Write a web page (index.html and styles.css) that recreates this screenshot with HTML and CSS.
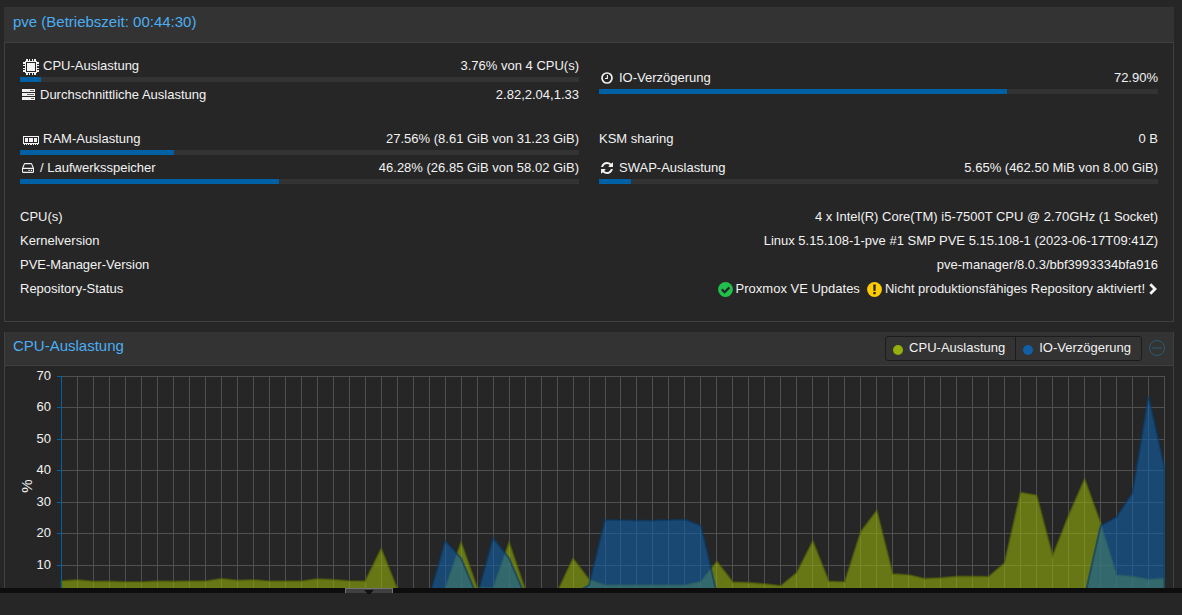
FILE: index.html
```html
<!DOCTYPE html>
<html lang="de">
<head>
<meta charset="utf-8">
<title>pve</title>
<link rel="stylesheet" href="styles.css">
</head>
<body>
<main class="content">
  <section class="panel">
    <header class="panel-header"><h2 class="panel-title">pve (Betriebszeit: 00:44:30)</h2></header>
    <div class="status">
      <div class="usage usage-top">
        <div class="column">
          <div class="item">
            <div class="line">
              <span class="label"><svg class="icon icon-wide" viewBox="0 0 16 16" width="16" height="16" shape-rendering="crispEdges"><path fill="currentColor" fill-rule="evenodd" d="M2 2h12v12H2zM3 3v10h10V3zM4 4h8v8H4zM3 0h2v2H3zM6 0h1v2H6zM9 0h1v2H9zM11 0h2v2h-2zM3 14h2v2H3zM6 14h1v2H6zM9 14h1v2H9zM11 14h2v2h-2zM0 3h2v2H0zM0 6h2v1H0zM0 9h2v1H0zM0 11h2v2H0zM14 3h2v2h-2zM14 6h2v1h-2zM14 9h2v1h-2zM14 11h2v2h-2z"/></svg>CPU-Auslastung</span>
              <span>3.76% von 4 CPU(s)</span>
            </div>
            <div class="bar"><div class="fill" style="width:3.76%"></div></div>
          </div>
          <div class="item">
            <div class="line">
              <span class="label"><svg class="icon icon-tasks" viewBox="0 0 13 11" width="13" height="11"><path fill="currentColor" d="M0 0h13v3H0zM0 4h13v3H0zM0 8h13v3H0z"/><path stroke="#262626" stroke-width="1" d="M8 1.5h4M5 5.5h7M9 9.5h3" opacity=".7"/></svg>Durchschnittliche Auslastung</span>
              <span>2.82,2.04,1.33</span>
            </div>
          </div>
        </div>
        <div class="column column-center">
          <div class="item">
            <div class="line">
              <span class="label"><svg class="icon icon-fa" viewBox="0 0 12 12" width="12" height="12"><circle cx="6" cy="6" r="5" fill="none" stroke="currentColor" stroke-width="1.7"/><path d="M6.4 3v3.5H4" fill="none" stroke="currentColor" stroke-width="1.1"/></svg>IO-Verzögerung</span>
              <span>72.90%</span>
            </div>
            <div class="bar"><div class="fill" style="width:72.9%"></div></div>
          </div>
        </div>
      </div>
      <div class="usage">
        <div class="column">
          <div class="item">
            <div class="line">
              <span class="label"><svg class="icon icon-wide" viewBox="0 0 16 16" width="16" height="16" shape-rendering="crispEdges"><path fill="currentColor" fill-rule="evenodd" d="M0 4h16v8H0zM1 5v6h14V5zM2 6h3v4H2zM6 6h4v4H6zM11 6h3v4h-3zM1 12h1v1H1zM3 12h1v1H3zM5 12h1v1H5zM7 12h2v1H7zM10 12h1v1h-1zM12 12h1v1h-1zM14 12h1v1h-1z"/></svg>RAM-Auslastung</span>
              <span>27.56% (8.61 GiB von 31.23 GiB)</span>
            </div>
            <div class="bar"><div class="fill" style="width:27.56%"></div></div>
          </div>
          <div class="item">
            <div class="line">
              <span class="label"><svg class="icon icon-fa" viewBox="0 0 12 10" width="12" height="10"><path d="M.5 5.5L2.2 1.2Q2.4.6 3 .6h6q.6 0 .8.6l1.7 4.3v3q0 .9-.9.9H1.400q-.9 0-.9-.9zM.5 5.400h11" fill="none" stroke="currentColor" stroke-width="1.1"/><path fill="currentColor" d="M6.500 6.700h1.300V8H6.500zM8.800 6.700h1.300V8H8.800z"/></svg>/ Laufwerksspeicher</span>
              <span>46.28% (26.85 GiB von 58.02 GiB)</span>
            </div>
            <div class="bar"><div class="fill" style="width:46.28%"></div></div>
          </div>
        </div>
        <div class="column">
          <div class="item">
            <div class="line"><span>KSM sharing</span><span>0 B</span></div>
          </div>
          <div class="item">
            <div class="line">
              <span class="label"><svg class="icon icon-fa" viewBox="0 0 1536 1536" width="12" height="12"><path fill="currentColor" d="M1511 928q0 5-1 7-64 268-268 434.500T764 1536q-146 0-282.500-55T238 1324l-129 129q-19 19-45 19t-45-19-19-45V960q0-26 19-45t45-19h448q26 0 45 19t19 45-19 45l-137 137q71 66 161 102t187 36q134 0 250-65t186-179q11-17 53-117 8-23 30-23h192q13 0 22.500 9.500t9.500 22.500zm25-800v448q0 26-19 45t-45 19h-448q-26 0-45-19t-19-45 19-45l138-138Q969 256 768 256q-134 0-250 65T332 500q-11 17-53 117-8 23-30 23H50q-13 0-22.500-9.500T18 608v-7q65-268 270-434.500T768 0q146 0 284 55.500T1297 212l130-129q19-19 45-19t45 19 19 45z"/></svg>SWAP-Auslastung</span>
              <span>5.65% (462.50 MiB von 8.00 GiB)</span>
            </div>
            <div class="bar"><div class="fill" style="width:5.65%"></div></div>
          </div>
        </div>
      </div>
      <dl class="facts">
        <div class="line"><dt>CPU(s)</dt><dd>4 x Intel(R) Core(TM) i5-7500T CPU @ 2.70GHz (1 Socket)</dd></div>
        <div class="line"><dt>Kernelversion</dt><dd>Linux 5.15.108-1-pve #1 SMP PVE 5.15.108-1 (2023-06-17T09:41Z)</dd></div>
        <div class="line"><dt>PVE-Manager-Version</dt><dd>pve-manager/8.0.3/bbf3993334bfa916</dd></div>
        <div class="line"><dt>Repository-Status</dt><dd><a class="repo" href="#repositories">
          <svg viewBox="0 0 15 15" width="15" height="15"><circle cx="7.500" cy="7.500" r="7.400" fill="#21bf4b"/><path d="M3.800 7.400l2.800 2.800 4.800-4.800" fill="none" stroke="#262626" stroke-width="2.200"/></svg>
          <span class="repo-updates">Proxmox VE Updates</span>
          <svg viewBox="0 0 15 15" width="15" height="15"><circle cx="7.500" cy="7.500" r="7.400" fill="#fc0"/><path d="M6.200 2.500h2.600L8.500 9h-2zM6.300 10h2.400v2.300H6.300z" fill="#262626"/></svg>
          <span>Nicht produktionsfähiges Repository aktiviert!</span>
          <svg viewBox="0 0 10 12" width="10" height="12"><path d="M2.300 1.300L7 6l-4.700 4.700" fill="none" stroke="currentColor" stroke-width="2.800"/></svg></a></dd></div>
      </dl>
    </div>
  </section>

  <section class="panel panel-chart">
    <header class="panel-header panel-header-chart">
      <h2 class="panel-title">CPU-Auslastung</h2>
      <div class="tools">
        <div class="legend">
          <button class="legend-item" type="button"><span class="dot dot-cpu"></span>CPU-Auslastung</button>
          <button class="legend-item" type="button"><span class="dot dot-io"></span>IO-Verzögerung</button>
        </div>
        <button class="collapse" type="button" aria-label="Einklappen"><svg viewBox="0 0 16 16" width="16" height="16"><path d="M3 8h10" stroke="currentColor"/><circle cx="8" cy="8" r="7.500" fill="none" stroke="currentColor"/></svg></button>
      </div>
    </header>
    <div class="chart"><svg class="plot" id="plot" role="img" aria-label="CPU-Auslastung in %"></svg></div>
  </section>
</main>
<div class="splitter"><button class="splitter-handle" type="button" aria-label="Protokoll einklappen"><svg viewBox="0 0 10 5" width="10" height="5"><path d="M0 1h10L6 5H4z" fill="#111"/></svg></button></div>
<footer class="log"></footer>
<script src="chart.js"></script>
</body>
</html>
```
FILE: styles.css
```css
* { box-sizing: border-box; }

body {
  display: flex;
  flex-direction: column;
  height: 100vh;
  margin: 0;
  overflow: hidden;
  background: #262626;
  color: #f2f2f2;
  font: 13px/24px "Liberation Sans", Arial, sans-serif;
}

button {
  padding: 0;
  border: 0;
  background: none;
  color: inherit;
  font: inherit;
}

.content {
  display: flex;
  flex: 1;
  flex-direction: column;
  gap: 10px;
  min-height: 0;
  padding: 7px 8px 0 4px;
  overflow: hidden;
}

.panel {
  flex: none;
  border: 1px solid #404040;
  border-top: 0;
}

.panel-chart {
  flex: 1;
  min-height: 0;
  border-bottom: 0;
  overflow: hidden;
}

.panel-header {
  display: flex;
  justify-content: space-between;
  height: 36px;
  margin: 0 -1px;
  padding: 3px 9px;
  border-bottom: 1px solid #404040;
  background: #333;
}

.panel-header-chart {
  height: 34px;
  padding-top: 2px;
}

.panel-title {
  margin: 0;
  color: #4baef3;
  font-size: 15px;
  font-weight: 400;
}

.status {
  padding: 10px 15px 21px;
  line-height: 26px;
}

.usage {
  display: grid;
  grid-template-columns: 1fr 1fr;
  gap: 20px;
}

.usage-top { margin-bottom: 20px; }

.column {
  display: flex;
  flex-direction: column;
  justify-content: space-between;
}

.column-center { justify-content: center; }

.line {
  display: flex;
  justify-content: space-between;
  height: 24px;
  white-space: nowrap;
}

.label {
  display: flex;
  align-items: center;
  height: 26px;
}

.icon { flex: none; }
.icon-wide { margin: 1px 4px 0 3px; }
.icon-tasks { margin: 0 5px 1px 2px; }
.icon-fa { margin: 0 6px 0 2px; }

.bar {
  height: 5px;
  background: #333;
}

.fill {
  height: 100%;
  background: #0060a4;
}

.facts { margin: 20px 0 0; }
.facts dd { margin: 0; }

.repo {
  display: flex;
  align-items: center;
  gap: 3px;
  color: inherit;
  text-decoration: none;
}

.repo-updates { margin-right: 4px; }

.tools {
  display: flex;
  align-items: center;
  gap: 7px;
}

.legend {
  display: flex;
  height: 25px;
  border: 1px solid #1c1c1c;
  border-radius: 3px;
}

.legend-item {
  display: flex;
  align-items: center;
  gap: 6px;
  padding: 0 10px 0 7px;
}

.legend-item + .legend-item { border-left: 1px solid #1c1c1c; }

.dot {
  width: 10px;
  height: 10px;
  margin-top: 4px;
  border-radius: 50%;
}

.dot-cpu { background: #94ae0a; }
.dot-io { background: #115fa6; }

.collapse {
  display: flex;
  color: #2b5a73;
}

.chart { padding-right: 8px; }

.plot {
  display: block;
  width: 100%;
  height: 240px;
}

.plot text { fill: #f2f2f2; }
.plot .axis-title { font-size: 15px; }
.grid { stroke: #505050; }
.axis { stroke: #0060a4; }

.area {
  fill-opacity: .6;
  stroke-opacity: .6;
  stroke-width: 2;
}

.area-cpu { fill: #94ae0a; stroke: #566606; }
.area-io { fill: #115fa6; stroke: #0a3863; }

.splitter {
  display: flex;
  flex: none;
  height: 5px;
  padding-left: 345px;
  background: #0d0d0d;
}

.splitter-handle {
  display: flex;
  justify-content: center;
  width: 48px;
  height: 5px;
  border: 1px solid #737373;
  border-bottom: 0;
  background: #404040;
}

.log {
  flex: none;
  height: 22px;
}
```
FILE: chart.js
```js
const cpu = [
  5.1, 5.4, 4.9, 4.9, 4.8, 4.8, 5, 4.9, 5, 5, 5.8, 5.2, 5.4, 5, 5, 5, 5.7, 5.5, 5.1, 5,
  15.3, 2.6, 2, 2, 2.7, 17.4, 3, 2.8, 17.3, 2.5, 2, 1.5, 12.2, 5.6, 3.7, 3.7, 3.7, 3.7, 3.7, 3.7,
  4.9, 11.2, 4.7, 4.5, 4.1, 3.5, 7.7, 17.7, 4.9, 4.8, 20.7, 27.4, 7.3, 7, 5.8, 6, 6.5, 6.5, 6.4, 10.8,
  33.1, 32.3, 13, 25.8, 37.4, 23.4, 6.9, 6.5, 5.6, 5.9
];
const io = [
  0, 0, 0, 0, 0, 0, 0, 0, 0, 0, 0, 0, 0, 0, 0, 0, 0, 0, 0, 0,
  0, 0, 0, 0, 17.8, 12.3, 0.3, 18.7, 12.3, 0.4, 0, 0, 0.8, 3.8, 24.4, 24.4, 24.3, 24.3, 24.4, 24.6,
  22.6, 1.1, 0, 0, 0, 0, 0, 0, 0, 0, 0, 0, 0, 0, 0, 0, 0, 0, 0, 0,
  0, 0, 0, 0, 0, 22.6, 25.4, 33.1, 63.8, 41
];

const svg = document.getElementById("plot");
const left = 56;
const top0 = 10;
const maxValue = 70;
const unit = 3.15;
const height = maxValue * unit;

function add(name, attributes, text) {
  const node = document.createElementNS("http://www.w3.org/2000/svg", name);
  for (const key in attributes) node.setAttribute(key, attributes[key]);
  if (text) node.textContent = text;
  svg.appendChild(node);
}

function draw() {
  svg.replaceChildren();
  const width = svg.getBoundingClientRect().width - left - 1;
  const x = i => left + width * i / (cpu.length - 1);
  const y = v => top0 + (maxValue - v) * unit;

  for (let i = 0; i < cpu.length; i++) {
    add("path", { class: "grid", d: `M${Math.round(x(i)) + 0.5} ${top0}v${height}` });
  }
  for (let v = 10; v <= maxValue; v += 10) {
    const row = Math.floor(y(v) + 0.01);
    add("path", { class: "grid", d: `M${left} ${row + 0.5}h${width + 1}` });
    add("path", { class: "axis", d: `M${left - 4} ${row + 0.5}h5` });
    add("text", { x: left - 10, y: row + 4, "text-anchor": "end" }, String(v));
  }

  [[cpu, "area-cpu"], [io, "area-io"]].forEach(([data, name]) => {
    const points = data.map((v, i) => `${(x(i) + 0.5).toFixed(1)} ${(y(v) + 0.5).toFixed(1)}`);
    add("path", { class: `area ${name}`, d: `M${x(0) + 0.5} ${y(0)}L${points.join("L")}V${y(0)}Z` });
  });

  add("path", { class: "axis", d: `M${left + 0.5} ${top0}v${height}` });
  add("text", { class: "axis-title", transform: "translate(27 120) rotate(-90)", "text-anchor": "middle" }, "%");
}

draw();
window.addEventListener("resize", draw);
```
